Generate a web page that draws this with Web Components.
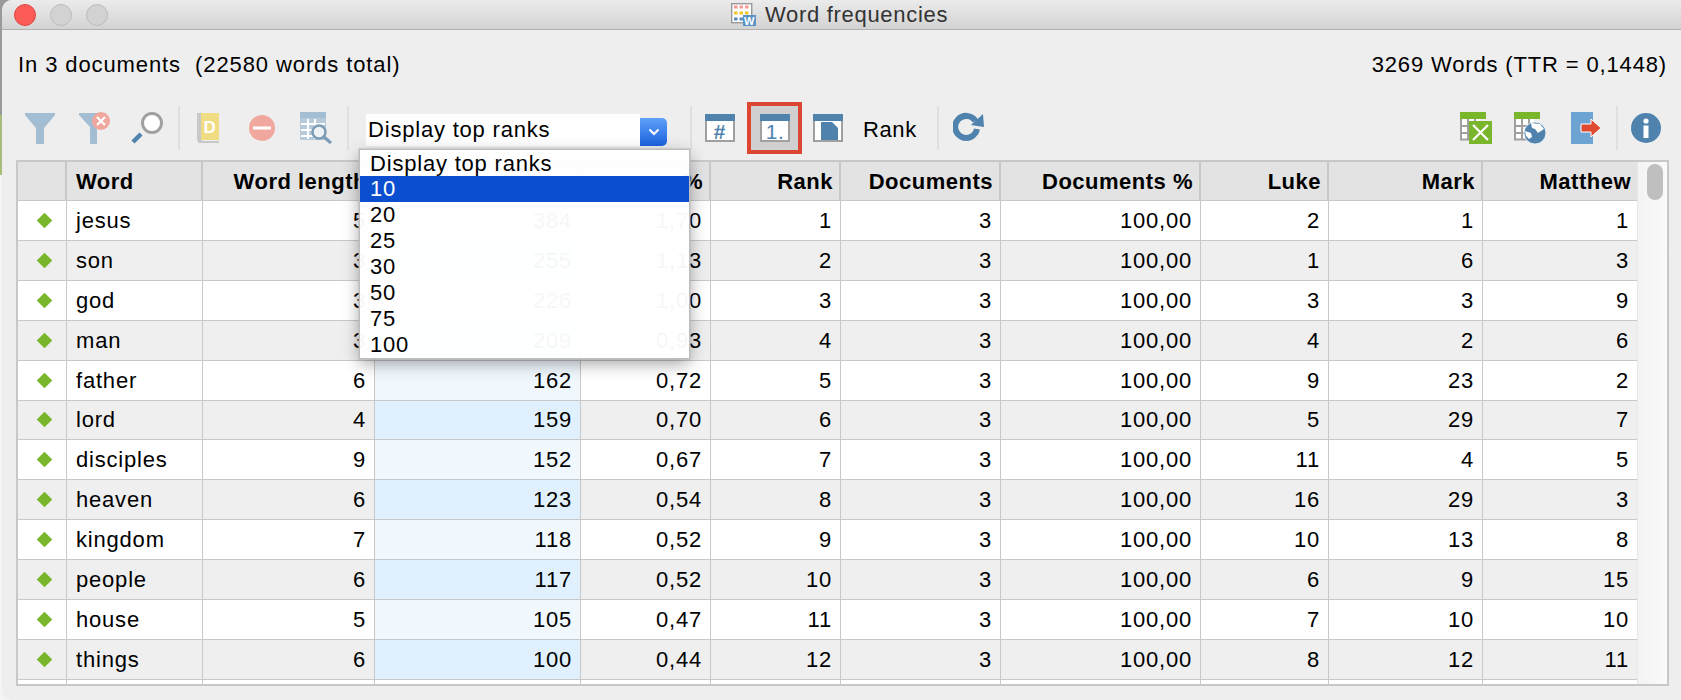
<!DOCTYPE html>
<html lang="en"><head><meta charset="utf-8"><title>Word frequencies</title>
<style>
html,body{margin:0;padding:0;background:#fff;width:1681px;height:700px;overflow:hidden;font-family:"Liberation Sans",Arial,sans-serif;}
</style></head>
<body>
<wf-desktop>
<wf-window>
  <wf-titlebar slot="title">Word frequencies</wf-titlebar>
  <wf-info slot="info"></wf-info>
  <wf-toolbar slot="toolbar"></wf-toolbar>
  <wf-table slot="table"></wf-table>
</wf-window>
</wf-desktop>
<script>
const BLUE='#4f83ae',FADE='#a3bdd3';
const GRID=`<rect width="26" height="7" fill="#7ab62c"/><rect y="7" width="20" height="21" fill="#fff"/><path d="M1 7V28M8 7V27M15 7V27M0 14H20M0 21H20M0 27.5H20" stroke="#a0a0a0" stroke-width="2"/>`;
const ICONS={
 filter:[30,31,`<path d="M0 0H30V2L19 15V31H11V15L0 2Z" fill="${FADE}"/>`],
 filterx:[32,32,`<path d="M0 1H27V3L18 15V32H11V15L0 3Z" fill="${FADE}"/><circle cx="22" cy="9" r="9" fill="#f0a79e"/><path d="M18 5L26 13M26 5L18 13" stroke="#fff" stroke-width="2.2"/>`],
 lens:[32,32,`<path d="M2 30L10 22" stroke="${BLUE}" stroke-width="4.5"/><circle cx="21" cy="11" r="9.5" fill="#fff" stroke="#a0a0a0" stroke-width="3"/>`],
 book:[22,31,`<rect x="0" y="0" width="22" height="31" fill="#eee"/><rect x="0" y="0" width="5" height="28" fill="#c8c8c8"/><rect x="4" y="0" width="18" height="27" fill="#f0dc82"/><path d="M1 29H22" stroke="#c8c8c8" stroke-width="2"/><text x="13" y="20" font-family="Liberation Sans" font-size="17" font-weight="700" text-anchor="middle" fill="#fff">D</text>`],
 minus:[26,26,`<circle cx="13" cy="13" r="13" fill="#f0a79e"/><rect x="4" y="11.5" width="18" height="3" fill="#fff"/>`],
 tsearch:[32,32,`<rect x="0" y="0" width="26" height="6" fill="${FADE}"/><rect x="0" y="6" width="26" height="22" fill="${FADE}" opacity=".75"/><path d="M1 12H25M1 18H25M1 24H25M8 7V27M15 7V27" stroke="#fff" stroke-width="2"/><circle cx="19" cy="20" r="6.5" fill="#eef2f5" stroke="#7d9cb6" stroke-width="2.5"/><path d="M24 25L31 31" stroke="#7d9cb6" stroke-width="3.2"/>`],
 hash:[30,28,`<rect x="0" y="0" width="30" height="28" fill="#a0a0a0"/><rect x="2" y="6" width="26" height="20" fill="#fff"/><rect width="30" height="7" fill="${BLUE}"/><text x="15" y="25" font-family="Liberation Sans" font-size="21" font-weight="700" text-anchor="middle" fill="${BLUE}">#</text>`],
 one:[30,28,`<rect x="0" y="0" width="30" height="28" fill="#a0a0a0"/><rect x="2" y="6" width="26" height="20" fill="#fff"/><rect width="30" height="7" fill="${BLUE}"/><text x="15" y="24.5" font-family="Liberation Sans" font-size="21" text-anchor="middle" fill="${BLUE}">1.</text>`],
 page:[30,28,`<rect x="0" y="0" width="30" height="28" fill="#a0a0a0"/><rect x="2" y="6" width="26" height="20" fill="#fff"/><rect width="30" height="7" fill="${BLUE}"/><path d="M8 8H19L25 14V26H8Z" fill="${BLUE}"/>`],
 refresh:[34,34,`<path d="M22.5 10A11 11 0 1 0 24 18" fill="none" stroke="${BLUE}" stroke-width="6"/><path d="M30 3L31 16L18 14Z" fill="${BLUE}"/>`],
 xls:[32,32,`${GRID}<rect x="9" y="9" width="23" height="23" fill="#7ab62c"/><path d="M13 13L28 28M28 13L13 28" stroke="#fff" stroke-width="2.2"/>`],
 globe:[32,32,`${GRID}<circle cx="21" cy="21" r="11" fill="${BLUE}" stroke="#fff" stroke-width=".8"/><path d="M17 11L26 12L30 17L24 21L21 17L18 16ZM11 19L17 21L18 25L15 27L12 24Z" fill="#fff"/>`],
 exp:[30,32,`<rect width="22" height="32" fill="#6ea4d3"/><path d="M10 12H20V7L30 16L20 25V20H10Z" fill="#e04a30" stroke="#fff" stroke-width="1"/>`],
 info:[30,30,`<circle cx="15" cy="15" r="15" fill="${BLUE}"/><circle cx="15" cy="8" r="2.6" fill="#fff"/><rect x="12.5" y="12.5" width="5" height="12.5" fill="#fff"/>`],
 app:[25,23,`<rect x=".7" y=".7" width="20" height="19" fill="#fff" stroke="#9a9a9a" stroke-width="1.4"/><path d="M3 4H18" stroke="#f59a96" stroke-width="3" stroke-dasharray="3.5 2"/><path d="M3 10H18" stroke="#f2c526" stroke-width="3" stroke-dasharray="3.5 2"/><path d="M3 16H12" stroke="#5a8fbc" stroke-width="3" stroke-dasharray="3.5 2"/><rect x="12" y="12" width="13" height="11" fill="#5a94c6"/><text x="18.5" y="22" font-family="Liberation Sans" font-size="11" font-weight="700" text-anchor="middle" fill="#fff">W</text>`]
};
function svg(n){const [w,h,b]=ICONS[n];return `<svg xmlns="http://www.w3.org/2000/svg" width="${w}" height="${h}" viewBox="0 0 ${w} ${h}" style="display:block">${b}</svg>`;}
function el(name,tpl){customElements.define(name,class extends HTMLElement{constructor(){super();this.attachShadow({mode:'open'}).innerHTML=typeof tpl==='function'?tpl(this):tpl;}});}

el('wf-desktop',`<style>:host{display:block;width:1681px;height:700px;background:linear-gradient(#9a9a9a 0,#9a9a9a 115px,#a9bd7a 115px,#a9bd7a 175px,#f4f4f4 175px);}</style><slot></slot>`);
el('wf-window',`<style>:host{display:flex;flex-direction:column;box-sizing:border-box;margin-left:2px;width:1679px;height:700px;background:#eee;border-radius:10px 0 0 10px;overflow:hidden;position:relative}</style>
<slot name="title"></slot><slot name="info"></slot><slot name="toolbar"></slot><slot name="table"></slot>`);
el('wf-titlebar',()=>`<style>
:host{display:flex;align-items:center;box-sizing:border-box;height:30px;flex:none;background:linear-gradient(#ebebeb,#d3d3d3);border-bottom:1px solid #b1b1b1;position:relative;color:#333;font-size:22px;letter-spacing:.7px}
.l{display:flex;gap:14px;padding-left:12px;width:0;flex:none;white-space:nowrap}
.c{width:22px;height:22px;box-sizing:border-box;border-radius:50%;background:#d2d2d2;border:1px solid #bcbcbc;flex:none}
.c.r{background:#fc5b57;border-color:#e0443e}
.m{flex:1;display:flex;justify-content:center;align-items:center;gap:9px;padding-right:16px}
</style><div class="l"><span class="c r"></span><span class="c"></span><span class="c"></span></div>
<div class="m">${svg('app')}<slot></slot></div>`);
el('wf-info',`<style>:host{display:flex;justify-content:space-between;align-items:center;height:70px;flex:none;box-sizing:border-box;padding:0 14px 0 16px;font-size:22px;letter-spacing:.85px;color:#000;white-space:pre}
.a{letter-spacing:.9px}</style><span class="a">In 3 documents  (22580 words total)</span><span>3269 Words (TTR = 0,1448)</span>`);
el('wf-sep',`<style>:host{display:block;width:2px;height:44px;background:#e0e0e0;flex:none}</style>`);
el('wf-icon',t=>`<style>:host{display:block;flex:none}</style>${svg(t.getAttribute('name'))}`);
el('wf-active',`<style>:host{display:flex;box-sizing:border-box;width:55px;height:52px;align-items:center;justify-content:center;border:4px solid #dd4632;background:#d0d0d0;flex:none}</style><slot></slot>`);
el('wf-combo',()=>{
 const items=['Display top ranks','10','20','25','30','50','75','100'];
 return `<style>
 :host{display:flex;position:relative;width:301px;height:32px;flex:none;font-size:22px;letter-spacing:.8px;color:#000}
 .v{flex:none;width:274px;height:32px;background:#fff;box-sizing:border-box;padding-left:2px;line-height:32px}
 .b{flex:none;width:27px;height:28px;align-self:flex-end;border-radius:0 5px 5px 0;background:linear-gradient(#5fa0f7,#1c62e0);display:flex;align-items:center;justify-content:center}
 .p{position:absolute;left:-6px;top:36px;width:329px;background:rgba(255,255,255,.965);box-shadow:0 0 0 1.5px #bdbdbd,0 5px 16px rgba(0,0,0,.38);z-index:5}
 .i{height:26px;line-height:26px;padding-left:10px}
 .i:first-child{line-height:28px}
 .i.s{background:rgba(0,70,205,.955);color:#fff}
 </style><div class="v">Display top ranks</div><div class="b"><svg width="12" height="8" viewBox="0 0 12 8"><path d="M1.5 1.5L6 6L10.5 1.5" fill="none" stroke="#fff" stroke-width="2"/></svg></div>
 <div class="p">${items.map((x,i)=>`<div class="i${i==1?' s':''}">${x}</div>`).join('')}</div>`;
});
el('wf-toolbar',()=>{
 const ic=(n,m)=>`<wf-icon name="${n}" style="margin-left:${m}px"></wf-icon>`;
 const sp=m=>`<wf-sep style="margin-left:${m}px"></wf-sep>`;
 return `<style>:host{display:flex;align-items:center;height:52px;flex:none;margin-top:2px;font-size:22px;letter-spacing:.6px;position:relative;z-index:3}</style>
 ${ic('filter',23)}${ic('filterx',24)}${ic('lens',20)}${sp(15)}${ic('book',17)}${ic('minus',30)}${ic('tsearch',25)}${sp(15)}
 <wf-combo style="margin-left:17px;margin-top:4px"></wf-combo>${sp(23)}${ic('hash',13)}
 <wf-active style="margin-left:12px">${svg('one')}</wf-active>${ic('page',11)}
 <span style="margin-left:20px;width:52px;flex:none;white-space:nowrap;padding-top:4px">Rank</span>${sp(22)}${ic('refresh',14)}
 ${ic('xls',473)}${ic('globe',22)}${ic('exp',25)}${sp(15)}${ic('info',13)}`;
});
const COLS='49px 136px 172px 206px 130px 130px 160px 200px 128px 154px 154px';
el('wf-row',t=>{
 const c=JSON.parse(t.getAttribute('data-c'));
 const alt=t.hasAttribute('alt');
 return `<style>
 :host{display:grid;grid-template-columns:${COLS};height:40px;box-sizing:border-box;border-bottom:1px solid #c8c8c8;background:${alt?'#efefef':'#fff'};font-size:22px;letter-spacing:.8px;color:#000}
 div{border-right:1px solid #c8c8c8;display:flex;align-items:center;justify-content:flex-end;padding:1px 8px 0 9px;white-space:nowrap;overflow:hidden;box-sizing:border-box}
 div.w{justify-content:flex-start}
 div.d{justify-content:center;padding:0}
 div.f{background:${alt?'#e0f1fd':'#f0f8fe'}}
 div:last-child{border-right:0}
 i{display:block;width:11px;height:11px;background:#7ab62c;transform:rotate(45deg);margin-left:4px}
 </style><div class="d"><i></i></div><div class="w">${c[0]}</div><div>${c[1]}</div><div class="f">${c[2]}</div><div>${c[3]}</div><div>${c[4]}</div><div>3</div><div>100,00</div><div>${c[5]}</div><div>${c[6]}</div><div>${c[7]}</div>`;
});
el('wf-header',`<style>
 :host{display:grid;grid-template-columns:${COLS};height:39px;box-sizing:border-box;border-bottom:1px solid #c8c8c8;background:#e3e3e3;font-size:22px;font-weight:700;letter-spacing:.5px;color:#000}
 div{border-right:2px solid #c8c8c8;display:flex;align-items:center;justify-content:flex-end;padding:2px 6px 0 9px;white-space:nowrap;overflow:hidden;box-sizing:border-box}
 div:last-child{border-right:0}
 </style><div></div><div style="justify-content:flex-start">Word</div><div>Word length</div><div style="padding-right:52px">Frequency</div><div>%</div><div>Rank</div><div>Documents</div><div>Documents %</div><div>Luke</div><div>Mark</div><div>Matthew</div>`);
el('wf-stub',`<style>:host{display:grid;grid-template-columns:${COLS};height:4px;background:#fff}div{border-right:1px solid #c8c8c8;box-sizing:border-box}div:last-child{border-right:0}</style>${'<div></div>'.repeat(11)}`);
el('wf-scrollbar',`<style>:host{display:block;box-sizing:border-box;width:29px;background:linear-gradient(90deg,#f3f3f3,#fafafa);padding:2px 4px 0 9px;border-left:1px solid #e8e8e8}
 b{display:block;height:36px;background:#bfbfbf;border-radius:8px}</style><b></b>`);
const DATA=[['jesus',5,384,'1,70',1,2,1,1],['son',3,255,'1,13',2,1,6,3],['god',3,226,'1,00',3,3,3,9],['man',3,209,'0,93',4,4,2,6],['father',6,162,'0,72',5,9,23,2],['lord',4,159,'0,70',6,5,29,7],['disciples',9,152,'0,67',7,11,4,5],['heaven',6,123,'0,54',8,16,29,3],['kingdom',7,118,'0,52',9,10,13,8],['people',6,117,'0,52',10,6,9,15],['house',5,105,'0,47',11,7,10,10],['things',6,100,'0,44',12,8,12,11]];
el('wf-table',()=>`<style>
 :host{display:flex;box-sizing:border-box;margin:6px 12px 0 14px;width:1653px;height:526px;flex:none;border:2px solid #c8c8c8;border-right-width:2px;background:#fff;overflow:hidden}
 .m{flex:none;width:1619px;display:flex;flex-direction:column}
 wf-scrollbar{flex:1}
 </style><div class="m"><wf-header></wf-header>${DATA.map((r,i)=>`<wf-row ${i%2?'alt':''} data-c='${JSON.stringify(r)}'></wf-row>`).join('')}<wf-stub></wf-stub></div><wf-scrollbar></wf-scrollbar>`);
</script>
</body></html>
